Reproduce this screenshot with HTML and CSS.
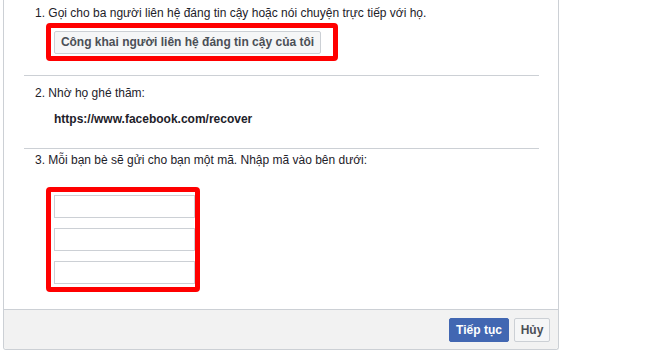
FILE: index.html
```html
<!DOCTYPE html>
<html lang="vi">
<head>
<meta charset="utf-8">
<link rel="stylesheet" href="styles.css">
</head>
<body>
<div class="card">
  <div class="body">
    <div class="section s1">
      <div class="step">1. Gọi cho ba người liên hệ đáng tin cậy hoặc nói chuyện trực tiếp với họ.</div>
      <div class="mark mark-btn">
        <button class="btn btn-light wide">Công khai người liên hệ đáng tin cậy của tôi</button>
      </div>
    </div>
    <div class="section s2">
      <div class="step">2. Nhờ họ ghé thăm:</div>
      <div class="url">https://www.facebook.com/recover</div>
    </div>
    <div class="section s3">
      <div class="step">3. Mỗi bạn bè sẽ gửi cho bạn một mã. Nhập mã vào bên dưới:</div>
      <div class="mark mark-inputs">
        <input class="code" type="text">
        <input class="code" type="text">
        <input class="code" type="text">
      </div>
    </div>
  </div>
  <div class="footer">
    <button class="btn btn-blue">Tiếp tục</button>
    <button class="btn btn-light">Hủy</button>
  </div>
</div>
</body>
</html>
```
FILE: styles.css
```css
* { box-sizing: border-box; }
html, body { margin: 0; padding: 0; background: #fff; }
body {
  font-family: "Liberation Sans", Arial, sans-serif;
  font-size: 12px;
  line-height: 16px;
  color: #1d2129;
}
.card {
  margin-left: 3px;
  width: 556px;
  border: 1px solid #ccd0d5;
  border-top: none;
  border-radius: 0 0 3px 3px;
  background: #fff;
}
.body { padding: 0 19px 0 20px; }
.section { border-top: 1px solid #ccd0d5; }
.section.s1 { border-top: none; padding: 5px 0 14px 0; }
.section.s2 { padding: 9px 0 21px 0; }
.section.s3 { padding: 3px 0 17px 0; }
.step { padding-left: 11px; white-space: nowrap; }
.url {
  margin-top: 10px;
  padding-left: 30px;
  font-weight: bold;
}
.mark {
  border: 5px solid #ff0000;
  border-radius: 4px;
  margin-left: 22px;
}
.mark-btn {
  display: inline-block;
  margin-top: 2px;
  padding: 3px 12px 2px 3px;
  line-height: 0;
}
.mark-inputs {
  width: 154px;
  margin-top: 19px;
  padding: 3px 0 3px 3px;
  display: flex;
  flex-direction: column;
  gap: 10px;
}
.code {
  display: block;
  width: 141px;
  height: 23px;
  margin: 0;
  border: 1px solid #ccd0d5;
  background: #fff;
  padding: 0 4px;
  font: inherit;
}
.btn {
  font-family: "Liberation Sans", Arial, sans-serif;
  font-size: 12px;
  font-weight: bold;
  height: 24px;
  line-height: 22px;
  padding: 0 8px;
  border-radius: 2px;
  margin: 0;
  cursor: pointer;
}
.btn-light {
  background: #f5f6f7;
  border: 1px solid #ccd0d5;
  color: #4b4f56;
}
.wide { width: 267px; height: 23px; line-height: 21px; padding: 0; }
.btn-blue {
  background: #4267b2;
  border: 1px solid #4267b2;
  color: #fff;
}
.footer {
  background: #f2f2f2;
  border-top: 1px solid #ccd0d5;
  border-radius: 0 0 3px 3px;
  padding: 8px 8px 7px 0;
  display: flex;
  justify-content: flex-end;
  gap: 5px;
}
.footer .btn-blue { width: 60px; padding: 0; }
.footer .btn-light { width: 36px; padding: 0; }
```
